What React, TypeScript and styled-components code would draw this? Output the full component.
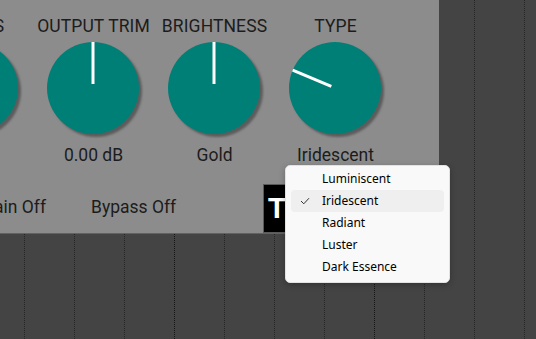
import React from "react";
import styled, { createGlobalStyle } from "styled-components";

const GlobalStyle = createGlobalStyle`
  html, body {
    margin: 0;
    padding: 0;
    background: #444444;
    overflow: hidden;
  }
`;

// stage holds the timeline grid and the plugin window in one grid cell
const Stage = styled.div`
  position: relative;
  width: 536px;
  height: 339px;
  overflow: hidden;
  display: grid;
  grid-template: 1fr / 1fr;
  background: #444444;
`;

const GridLines = styled.div`
  grid-area: 1 / 1;
  display: flex;
  padding-left: 24px;
  height: 100%;
`;

const Beat = styled.div<{ $bar: boolean }>`
  flex: 0 0 50px;
  height: 100%;
  box-sizing: border-box;
  border-left: 1px dotted ${(p) => (p.$bar ? "#161616" : "#262626")};
`;

const Panel = styled.div`
  grid-area: 1 / 1;
  align-self: start;
  width: 439px;
  height: 234px;
  box-sizing: border-box;
  background: #8c8c8c;
  border-bottom: 1px solid #626262;
  overflow: hidden;
  font-family: Roboto, "Liberation Sans", sans-serif;
  color: #1c1c1c;
  display: flex;
  flex-direction: column;
`;

const KnobRow = styled.div`
  display: flex;
  margin-left: -88px;
  padding-top: 15px;
`;

const KnobCol = styled.div`
  flex: 0 0 121px;
  display: flex;
  flex-direction: column;
  align-items: center;
`;

const Label = styled.div`
  font-size: 17.5px;
  line-height: 22px;
  white-space: nowrap;
  letter-spacing: 0.1px;
`;

const Value = styled.div`
  font-size: 17.5px;
  line-height: 22px;
  white-space: nowrap;
  margin-top: 2px;
`;

const KnobSvg = styled.svg`
  display: block;
  margin-top: 5px;
  margin-left: 7px;
`;

const BottomRow = styled.div`
  display: flex;
  align-items: center;
  margin-top: 16px;
  height: 50px;
`;

const Toggle = styled.div<{ $w: number; $ml: number; $right?: boolean }>`
  flex: 0 0 ${(p) => p.$w}px;
  margin-left: ${(p) => p.$ml}px;
  font-size: 17.5px;
  white-space: nowrap;
  text-align: ${(p) => (p.$right ? "right" : "left")};
`;

const Logo = styled.div`
  margin-top: 2px;
  width: 44px;
  height: 49px;
  box-sizing: border-box;
  background: #000;
  border: 1px solid #5a5a5a;
  color: #fff;
  font-family: "Liberation Sans", Arial, sans-serif;
  font-weight: bold;
  font-size: 29px;
  line-height: 47px;
  padding-left: 4px;
`;

const Menu = styled.div`
  position: absolute;
  left: 285px;
  top: 165px;
  width: 165px;
  box-sizing: border-box;
  padding: 2px 5px 4px;
  background: #f9f9f9;
  border: 1px solid #e2e2e2;
  border-radius: 5px;
  box-shadow: 0 2px 6px rgba(0, 0, 0, 0.25);
  font-family: "Noto Sans", "Open Sans", sans-serif;
  font-size: 12px;
  color: #000;
`;

const Item = styled.div<{ $active?: boolean }>`
  position: relative;
  height: 22px;
  line-height: 22px;
  padding-left: 31px;
  border-radius: 4px;
  background: ${(p) => (p.$active ? "#efefef" : "transparent")};
`;

const Check = styled.svg`
  position: absolute;
  left: 9px;
  top: 7px;
`;

function Knob({ angle }: { angle: number }) {
  const rad = ((angle - 90) * Math.PI) / 180;
  const cx = 46;
  const cy = 46;
  const x1 = cx + Math.cos(rad) * 4;
  const y1 = cy + Math.sin(rad) * 4;
  const x2 = cx + Math.cos(rad) * 46;
  const y2 = cy + Math.sin(rad) * 46;
  return (
    <KnobSvg width="100" height="100" viewBox="0 0 100 100">
      <defs>
        <filter id="kshadow" x="-10%" y="-10%" width="120%" height="120%">
          <feGaussianBlur stdDeviation="0.8" />
        </filter>
      </defs>
      <circle cx={cx + 3} cy={cy + 3} r="46" fill="#5c5c5c" filter="url(#kshadow)" />
      <circle cx={cx} cy={cy} r="46" fill="#007f77" />
      <line x1={x1} y1={y1} x2={x2} y2={y2} stroke="#fff" strokeWidth="3" />
    </KnobSvg>
  );
}

const knobs = [
  { label: "WARMS", value: "50 %", angle: 0 },
  { label: "OUTPUT TRIM", value: "0.00 dB", angle: 0 },
  { label: "BRIGHTNESS", value: "Gold", angle: 0 },
  { label: "TYPE", value: "Iridescent", angle: -67 },
];

const types = ["Luminiscent", "Iridescent", "Radiant", "Luster", "Dark Essence"];

export default function App() {
  const beats = Array.from({ length: 11 }, (_, i) => i);
  return (
    <>
      <GlobalStyle />
      <Stage>
        <GridLines>
          {beats.map((i) => (
            <Beat key={i} $bar={i % 4 === 3} />
          ))}
        </GridLines>
        <Panel>
          <KnobRow>
            {knobs.map((k) => (
              <KnobCol key={k.label}>
                <Label>{k.label}</Label>
                <Knob angle={k.angle} />
                <Value>{k.value}</Value>
              </KnobCol>
            ))}
          </KnobRow>
          <BottomRow>
            <Toggle $w={120} $ml={-74} $right>Auto Gain Off</Toggle>
            <Toggle $w={172} $ml={45}>Bypass Off</Toggle>
            <Logo>T</Logo>
          </BottomRow>
        </Panel>
        <Menu>
          {types.map((t) => (
            <Item key={t} $active={t === "Iridescent"}>
              {t === "Iridescent" && (
                <Check width="10" height="8" viewBox="0 0 10 8">
                  <path d="M1 4 L3.8 6.8 L9 1.2" fill="none" stroke="#333" strokeWidth="1" />
                </Check>
              )}
              {t}
            </Item>
          ))}
        </Menu>
      </Stage>
    </>
  );
}
